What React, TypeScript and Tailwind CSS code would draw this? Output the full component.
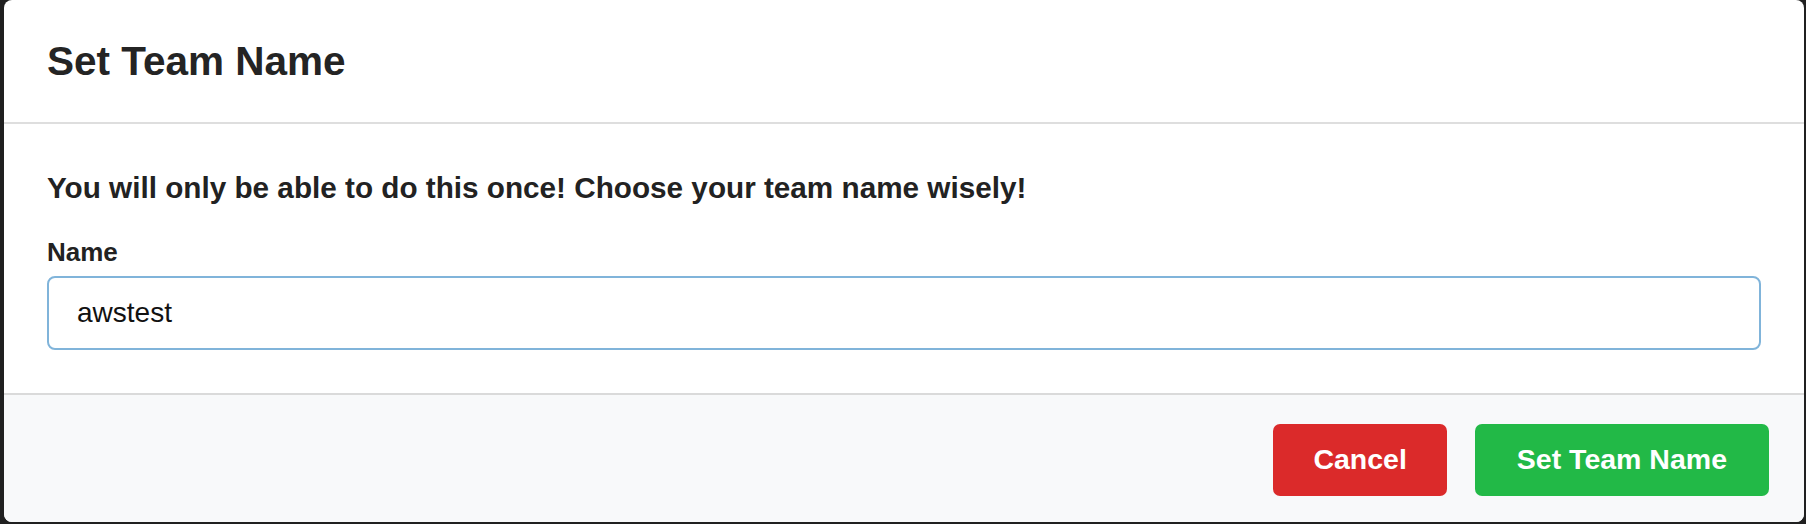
export default function App() {
  return (
    <div className="w-[1806px] h-[524px] bg-[#202020] pl-[4px] pr-[2px] pb-[2px] font-['Liberation_Sans',Arial,sans-serif]">
      <div className="h-full bg-white rounded-[8px] overflow-hidden flex flex-col">
        {/* Header */}
        <div className="px-[43px] py-[37px] border-b-2 border-[#dedede]">
          <h2 className="text-[40.5px] leading-[48px] font-bold text-[#242424]">Set Team Name</h2>
        </div>

        {/* Body */}
        <div className="px-[43px] pt-[46px] pb-[43px]">
          <p className="text-[29.7px] leading-[35px] font-bold text-[#222]">
            You will only be able to do this once! Choose your team name wisely!
          </p>
          <label className="block mt-[32px] text-[26px] leading-[31px] font-bold text-[#222]">Name</label>
          <input
            type="text"
            defaultValue="awstest"
            className="mt-[8px] w-full h-[74px] px-[28px] rounded-[8px] border-2 border-[#80b4da] text-[28px] text-[#111] outline-none bg-white"
          />
        </div>

        {/* Footer */}
        <div className="flex-1 bg-[#f8f9fa] border-t-2 border-[#dadada] flex items-center justify-end gap-[28px] pr-[35px] pt-[2px]">
          <button className="h-[72px] px-[40px] rounded-[7px] bg-[#db2a2a] text-white text-[28.5px] font-bold">
            Cancel
          </button>
          <button className="h-[72px] px-[42px] rounded-[7px] bg-[#22b947] text-white text-[28.5px] font-bold">
            Set Team Name
          </button>
        </div>
      </div>
    </div>
  );
}
